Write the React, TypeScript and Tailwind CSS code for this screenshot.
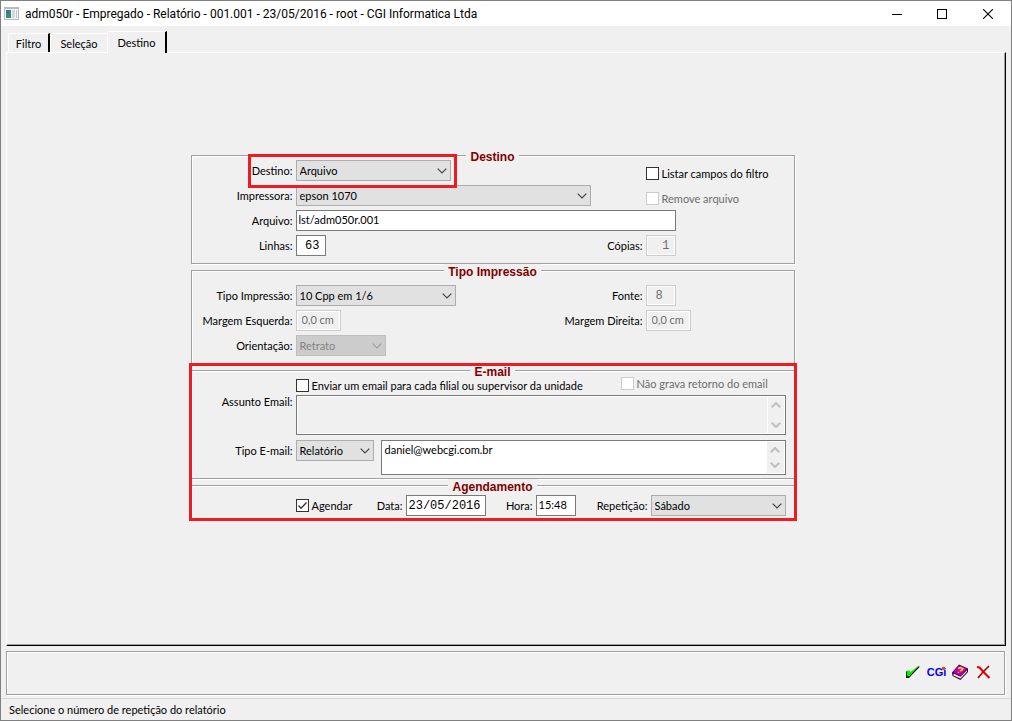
import React from 'react';
import clsx from 'clsx';

const Chevron = ({ className }: { className?: string }) => (
  <svg viewBox="0 0 10 6" className={clsx('h-[6px]', className)} fill="none" stroke="currentColor">
    <path d="M0.7 0.7 L5 5 L9.3 0.7" />
  </svg>
);

interface SelectBoxProps {
  id: string;
  options: string[];
  className: string;
  disabled?: boolean;
}

const SelectBox = ({ id, options, className, disabled }: SelectBoxProps) => (
  <div className={clsx('relative h-[21px]', className)}>
    <select
      id={id}
      disabled={disabled}
      className={clsx(
        'appearance-none block w-full h-full pl-[3px] pr-5 border opacity-100 outline-none',
        disabled ? 'bg-[#cccccc] border-[#bfbfbf] text-[#838383]' : 'bg-[#e1e1e1] border-[#adadad] text-black'
      )}
    >
      {options.map((o) => (
        <option key={o}>{o}</option>
      ))}
    </select>
    <Chevron className={clsx('absolute right-1 top-2 w-[10px] stroke-[1.2] pointer-events-none', disabled ? 'text-[#a0a0a0]' : 'text-[#444444]')} />
  </div>
);

interface TextBoxProps {
  id: string;
  value: string;
  className: string;
  disabled?: boolean;
}

const TextBox = ({ id, value, className, disabled }: TextBoxProps) => (
  <input
    id={id}
    type="text"
    defaultValue={value}
    disabled={disabled}
    className={clsx(
      'block h-[21px] border outline-none',
      disabled
        ? 'bg-[#f0f0f0] border-[#cccccc] text-[#6d6d6d] shadow-[inset_0_0_0_1px_#fff]'
        : 'bg-white border-[#7a7a7a] text-black',
      className
    )}
  />
);

interface CheckProps {
  label: string;
  checked?: boolean;
  disabled?: boolean;
  className?: string;
}

const Check = ({ label, checked, disabled, className }: CheckProps) => (
  <label className={clsx('flex items-center gap-[3px] h-[13px] leading-[15px] whitespace-nowrap', disabled && 'text-[#6d6d6d]', className)}>
    <span className="relative block w-[13px] h-[13px]">
      <input
        type="checkbox"
        defaultChecked={checked}
        disabled={disabled}
        className={clsx(
          'peer appearance-none block w-[13px] h-[13px] border bg-white',
          disabled ? 'border-[#cccccc]' : 'border-[#333333]'
        )}
      />
      <svg viewBox="0 0 13 13" className="absolute inset-0 hidden peer-checked:block pointer-events-none" fill="none" stroke="#333" strokeWidth="1.3">
        <path d="M2.5 6.5 L5 9.2 L10.5 3.5" />
      </svg>
    </span>
    {label}
  </label>
);

interface MemoProps {
  id: string;
  value?: string;
  className: string;
  readOnly?: boolean;
}

const Memo = ({ id, value, className, readOnly }: MemoProps) => (
  <div className={clsx('flex flex-1 border border-[#7a7a7a]', readOnly ? 'bg-[#f0f0f0] shadow-[inset_0_0_0_1px_#fff]' : 'bg-white', className)}>
    <textarea
      id={id}
      defaultValue={value}
      readOnly={readOnly}
      className="flex-1 resize-none outline-none bg-transparent px-[3px] py-[2px] leading-[14px]"
    />
    <div className={clsx('w-[17px] m-px bg-[#f0f0f0] flex flex-col items-center justify-between py-[5px] text-[#bfbfbf]', readOnly && 'border-l border-white')}>
      <Chevron className="w-[10px] rotate-180 stroke-2" />
      <Chevron className="w-[10px] stroke-2" />
    </div>
  </div>
);

const Group = ({ title, className, children }: { title: string; className: string; children: React.ReactNode }) => (
  <fieldset className="border border-[#a0a0a0] shadow-[1px_1px_0_#fff,inset_1px_1px_0_#fff]">
    <legend className="mx-auto px-1 h-[13px] leading-[16px] bg-[#f0f0f0] font-['Liberation_Sans',sans-serif] text-[12px] font-bold text-[#800000]">
      {title}
    </legend>
    <div className={className}>{children}</div>
  </fieldset>
);

const row = 'grid grid-cols-[101px_1fr_148px] gap-x-[3px] items-center';
const mono = "font-['Liberation_Mono',monospace] text-[12px]";

const tabs = ['Filtro', 'Seleção', 'Destino'];

export default function App() {
  return (
    <div className="min-h-screen flex flex-col bg-[#f0f0f0] border border-[#808080] font-[Lato,sans-serif] text-[11px] leading-[15px] text-black">
      <header className="flex items-center h-[25px] bg-white pl-[3px]">
        <svg viewBox="0 0 15 13" className="w-[15px] h-[13px]" shapeRendering="crispEdges">
          <rect width="15" height="13" fill="#b4bcc0" />
          <rect x="1" y="2" width="13" height="10" fill="#f4f6f6" />
          <rect x="2" y="3" width="5" height="8" fill="#3d8a78" />
          <rect x="2" y="3" width="3" height="4" fill="#3f6f9a" />
          <rect x="8" y="3" width="3" height="8" fill="#d5dadd" />
          <rect x="12" y="3" width="1" height="8" fill="#c3cacd" />
        </svg>
        <h1 className="ml-[6px] flex-1 font-[Roboto,sans-serif] text-[12px] leading-4 whitespace-nowrap">
          adm050r - Empregado - Relatório - 001.001 - 23/05/2016 - root - CGI Informatica Ltda
        </h1>
        <div className="flex">
          <button aria-label="Minimizar" className="w-[44px] h-[25px] flex items-center justify-center">
            <svg viewBox="0 0 10 10" className="w-[10px] h-[10px]" shapeRendering="crispEdges"><path d="M0 5h10v1H0z" /></svg>
          </button>
          <button aria-label="Maximizar" className="w-[46px] h-[25px] flex items-center justify-center">
            <svg viewBox="0 0 10 10" className="w-[10px] h-[10px]" fill="none" stroke="#000" shapeRendering="crispEdges"><path d="M.5 .5h9v9h-9z" /></svg>
          </button>
          <button aria-label="Fechar" className="w-[46px] h-[25px] flex items-center justify-center">
            <svg viewBox="0 0 10 10" className="w-[10px] h-[10px]" fill="none" stroke="#000" strokeWidth="1.1"><path d="M0 0L10 10M10 0L0 10" /></svg>
          </button>
        </div>
      </header>

      <nav role="tablist" className="flex items-end h-[26px] pl-[7px]">
        {tabs.map((tab, i) => (
          <button
            key={tab}
            role="tab"
            aria-selected={i === 2}
            className={clsx(
              'border-t border-l border-white rounded-tl-[2px]',
              i === 0 && 'w-[42px] h-[19px] border-r-2 border-r-black',
              i === 1 && 'w-[57px] h-[19px]',
              i === 2 && 'w-[60px] h-[22px] border-r-2 border-r-black pb-px -mb-px bg-[#f0f0f0] z-10'
            )}
          >
            {tab}
          </button>
        ))}
      </nav>

      <main className="flex-1 mx-[5px] border-t border-l border-white border-r border-r-black border-b border-b-black shadow-[inset_-1px_-1px_0_#a0a0a0] pt-[96px] pr-[27px]">
        <form className="w-[604px] mx-auto">
          <Group title="Destino" className="-mt-0.5 pb-[7px] flex flex-col gap-1">
            <div className={clsx(row, 'relative z-10 h-[21px]')}>
              <label htmlFor="destino" className="text-right">Destino:</label>
              <SelectBox id="destino" options={['Arquivo']} className="w-[155px]" />
              <Check label="Listar campos do filtro" className="mt-[6px]" />
              <span className="absolute left-[56px] -top-[6px] w-[209px] h-[34px] border-3 border-[#ed1c24] pointer-events-none" />
            </div>
            <div className={row}>
              <label htmlFor="impressora" className="text-right">Impressora:</label>
              <SelectBox id="impressora" options={['epson 1070']} className="w-[295px]" />
              <Check label="Remove arquivo" disabled className="mt-[6px]" />
            </div>
            <div className="flex items-center gap-[3px]">
              <label htmlFor="arquivo" className="w-[101px] text-right">Arquivo:</label>
              <TextBox id="arquivo" value="lst/adm050r.001" className="w-[380px] pl-[2px] pb-[2px]" />
            </div>
            <div className={row}>
              <label htmlFor="linhas" className="text-right">Linhas:</label>
              <div className="flex items-center justify-between">
                <TextBox id="linhas" value="63" className={clsx('w-[30px] text-right pr-[5px]', mono)} />
                <label htmlFor="copias">Cópias:</label>
              </div>
              <TextBox id="copias" value="1" disabled className={clsx('w-[30px] text-right pr-[5px]', mono)} />
            </div>
          </Group>

          <Group title="Tipo Impressão" className="pt-2 pb-[7px] flex flex-col gap-1">
            <div className={row}>
              <label htmlFor="tipo" className="text-right">Tipo Impressão:</label>
              <div className="flex items-center justify-between">
                <SelectBox id="tipo" options={['10 Cpp em 1/6']} className="w-[160px]" />
                <label htmlFor="fonte">Fonte:</label>
              </div>
              <TextBox id="fonte" value="8" disabled className={clsx('w-[30px] pl-[9px]', mono)} />
            </div>
            <div className={row}>
              <label htmlFor="esquerda" className="text-right">Margem Esquerda:</label>
              <div className="flex items-center justify-between">
                <TextBox id="esquerda" value="0,0 cm" disabled className="w-[45px] pl-[5px] pb-[2px]" />
                <label htmlFor="direita">Margem Direita:</label>
              </div>
              <TextBox id="direita" value="0,0 cm" disabled className="w-[45px] pl-[5px] pb-[2px]" />
            </div>
            <div className={row}>
              <label htmlFor="orientacao" className="text-right">Orientação:</label>
              <SelectBox id="orientacao" options={['Retrato']} disabled className="w-[90px]" />
            </div>
          </Group>

          <div className="relative">
            <Group title="E-mail" className="pb-[3px] pr-2">
              <div className="flex justify-between h-[18px] pl-[104px]">
                <Check label="Enviar um email para cada filial ou supervisor da unidade" className="mt-[2px]" />
                <Check label="Não grava retorno do email" disabled className="w-[165px]" />
              </div>
              <div className="flex gap-[3px]">
                <label htmlFor="assunto" className="w-[101px] text-right leading-[13px]">Assunto Email:</label>
                <Memo id="assunto" readOnly className="h-[40px]" />
              </div>
              <div className="flex gap-[3px] mt-[5px]">
                <label htmlFor="tipoEmail" className="w-[101px] text-right leading-[21px]">Tipo E-mail:</label>
                <div className="flex flex-1 gap-[7px]">
                  <SelectBox id="tipoEmail" options={['Relatório']} className="w-[78px]" />
                  <Memo id="email" value="daniel@webcgi.com.br" className="h-[35px]" />
                </div>
              </div>
            </Group>

            <Group title="Agendamento" className="pt-[3px] pb-[3px] pl-[104px] pr-2">
              <div className="flex items-center">
                <Check label="Agendar" checked className="flex-1" />
                <div className="flex items-center gap-[3px]">
                  <label htmlFor="data">Data:</label>
                  <TextBox id="data" value="23/05/2016" className={clsx('w-[80px] pl-[2px]', mono)} />
                </div>
                <div className="flex items-center justify-end gap-[3px] w-[90px]">
                  <label htmlFor="hora">Hora:</label>
                  <TextBox id="hora" value="15:48" className="w-[40px] pl-[2px] pb-[2px]" />
                </div>
                <div className="flex items-center justify-end gap-[3px] w-[210px]">
                  <label htmlFor="repeticao">Repetição:</label>
                  <SelectBox id="repeticao" options={['Sábado']} className="w-[135px]" />
                </div>
              </div>
            </Group>
            <span className="absolute -inset-x-[2px] -inset-y-px border-3 border-[#ed1c24] pointer-events-none" />
          </div>
        </form>
      </main>

      <div className="ml-[5px] mr-[6px] mt-[5px] mb-[3px] h-[44px] flex items-center justify-end gap-[7px] pr-[13px] pb-[2px] border border-[#a0a0a0] shadow-[1px_1px_0_#fff,inset_1px_1px_0_#fff]">
        <button aria-label="Confirmar">
          <svg viewBox="0 0 16 16" className="w-4 h-4">
            <path d="M1 7 L1 14 L4 14 L14.5 3 L14 2 L5 10 Z" fill="#000" />
            <path d="M1.8 6.5 L4.4 6.5 L5.5 8 L14.5 1 L4.5 12.2 L1.8 12.6 Z" fill="#00f000" />
          </svg>
        </button>
        <button aria-label="CGi" className="relative flex w-[17px] justify-center font-['Liberation_Sans',sans-serif] text-[11px] leading-4 font-bold text-[#0000ff]">
          CGi
          <span className="absolute right-0 top-[3px] w-[3px] h-[3px] bg-[#ff4000]" />
        </button>
        <button aria-label="Ajuda">
          <svg viewBox="0 0 16 16" className="w-4 h-4">
            <path d="M0 8.5 L7 0.5 L16 4.5 L16 8 L8.5 16 L0.5 12 Z" fill="#400040" />
            <path d="M1.5 10.5 L2 9.8 L8.5 12.8 L15 6.2 L15 7.6 L8.5 14.5 L1.5 11.5 Z" fill="#fff" />
            <path d="M1.2 8.2 L7.3 1.4 L14.8 4.8 L8.6 11.6 Z" fill="#c000c0" />
            <path d="M6 4.5 L8.5 3.5 L11 4.8 L9.8 6.3 L7.8 6.8 M6.8 8 L6 8.6" fill="none" stroke="#ffe000" strokeWidth="1.4" />
          </svg>
        </button>
        <button aria-label="Cancelar">
          <svg viewBox="0 0 16 16" className="w-4 h-4" fill="none">
            <path d="M2 3 L4.5 3.5 L8 7.5 L14.5 14" stroke="#e00000" strokeWidth="2" />
            <path d="M14 2 L8 8 L3 14" stroke="#b00000" strokeWidth="1.6" />
          </svg>
        </button>
      </div>

      <footer className="border-t border-[#d7d7d7] h-[22px] pl-2 pb-px flex items-center">
        Selecione o número de repetição do relatório
      </footer>
    </div>
  );
}
